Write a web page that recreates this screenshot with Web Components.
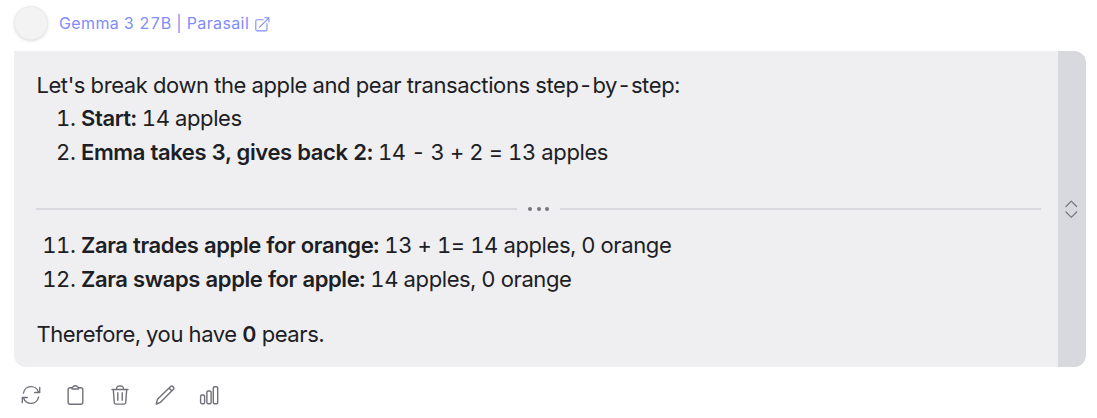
<!DOCTYPE html>
<html lang="en">
<head>
<meta charset="utf-8">
<title>Chat message</title>
<style>
body {
  margin: 0;
  background: #fff;
  font-family: Inter, "Liberation Sans", sans-serif;
}
</style>
</head>
<body>
<chat-message>
  <model-link slot="header">Gemma 3 27B | Parasail</model-link>
  <message-bubble>
    <message-line>Let's break down the apple and pear transactions step-by-step:</message-line>
    <list-line number="1."><b>Start:</b> 14 apples</list-line>
    <list-line number="2."><b>Emma takes 3, gives back 2:</b> 14 - 3 + 2 = 13 apples</list-line>
    <fold-divider></fold-divider>
    <list-line number="11."><b>Zara trades apple for orange:</b> 13 + 1= 14 apples, 0 orange</list-line>
    <list-line number="12."><b>Zara swaps apple for apple:</b> 14 apples, 0 orange</list-line>
    <message-line class="last">Therefore, you have <b>0</b> pears.</message-line>
  </message-bubble>
  <message-actions slot="footer"></message-actions>
</chat-message>

<script>
/**
 * Creates a template from a string.
 */
function html (text) {
  const template = document.createElement('template')
  template.innerHTML = text
  return template
}

/**
 * Base for all elements, clones the template into the shadow root.
 */
class BaseElement extends HTMLElement {
  constructor () {
    super()
    this.attachShadow({ mode: 'open' })
      .appendChild(this.constructor.template.content.cloneNode(true))
  }
}

customElements.define('chat-message',
  class extends BaseElement {
    static template = html(`
<style>
:host {
  display: flex;
  flex-direction: column;
  width: 1072px;
  padding: 5px 0 0 14px;
}
</style>
<slot name="header"></slot>
<slot></slot>
<slot name="footer"></slot>
`)
  }
)

customElements.define('model-link',
  class extends BaseElement {
    static template = html(`
<style>
:host {
  display: flex;
  align-items: center;
  height: 46px;
  box-sizing: border-box;
  padding-bottom: 10px;
  color: #818cf8;
  font-size: 16px;
  letter-spacing: 0.38px;
  font-variant-numeric: tabular-nums;
}
.avatar {
  width: 34px;
  height: 34px;
  border-radius: 50%;
  margin-right: 11px;
  box-sizing: border-box;
  background: #f3f3f3;
  border: 1px solid #ececec;
  box-shadow: 0 1px 3px rgba(0, 0, 0, 0.14);
}
svg {
  margin: 2px 0 0 6px;
}
</style>
<span class="avatar"></span>
<span><slot></slot></span>
<svg width="15" height="15" viewBox="0 0 15 15" fill="none" stroke="currentColor" stroke-width="1.1" stroke-linecap="round" stroke-linejoin="round">
  <path d="M8.2 2.7H2.3a1.5 1.5 0 0 0-1.5 1.5v8.2a1.5 1.5 0 0 0 1.5 1.5h8.2a1.5 1.5 0 0 0 1.5-1.5V6.5M4.3 10.4 13.9.8M9.7.8h4.2V5"/>
</svg>
`)
  }
)

customElements.define('message-bubble',
  class extends BaseElement {
    static template = html(`
<style>
:host {
  display: flex;
  height: 316px;
  overflow: hidden;
  border-radius: 0 12px 12px 12px;
  background: #efeff1;
  color: #1c2024;
  font-size: 22px;
  line-height: 34px;
  letter-spacing: -0.395px;
  font-variant-numeric: tabular-nums;
}
.content {
  flex: 1;
  padding: 17px 17px 0 22px;
}
.toggle {
  display: flex;
  align-items: center;
  justify-content: center;
  width: 28px;
  background: #d8d9df;
  color: #75757c;
}
svg {
  margin-right: 2px;
}
</style>
<div class="content"><slot></slot></div>
<div class="toggle">
  <svg width="14" height="20" viewBox="0 0 14 20" fill="none" stroke="currentColor" stroke-width="1.2" stroke-linecap="round" stroke-linejoin="round">
    <path d="M2 7.500 7.300 2.200l5.300 5.300M2 13l5.300 5.300L12.600 13"/>
  </svg>
</div>
`)
  }
)

customElements.define('message-line',
  class extends BaseElement {
    static template = html(`
<style>
:host {
  display: block;
  height: 33px;
  padding-left: 0.4px;
  white-space: nowrap;
}
:host(.last) {
  margin-top: 21px;
}
::slotted(b) {
  font-weight: 600;
}
</style>
<slot></slot>
`)
  }
)

customElements.define('list-line',
  class extends BaseElement {
    static template = html(`
<style>
:host {
  display: flex;
  height: 34px;
  white-space: nowrap;
}
.number {
  width: 39.5px;
  margin-right: 5.5px;
  text-align: right;
}
::slotted(b) {
  font-weight: 600;
}
</style>
<span class="number"></span>
<span><slot></slot></span>
`)

    connectedCallback () {
      this.shadowRoot.querySelector('.number').textContent = this.getAttribute('number')
    }
  }
)

customElements.define('fold-divider',
  class extends BaseElement {
    static template = html(`
<style>
:host {
  display: flex;
  align-items: center;
  box-sizing: border-box;
  height: 59px;
  padding-top: 20px;
  color: #75757c;
}
.line {
  flex: 1;
  height: 2px;
  background: #d8d9df;
}
.dots {
  display: flex;
  justify-content: center;
  gap: 4.5px;
  width: 43px;
}
i {
  width: 4px;
  height: 4px;
  border-radius: 50%;
  background: currentColor;
}
</style>
<span class="line"></span>
<span class="dots"><i></i><i></i><i></i></span>
<span class="line"></span>
`)
  }
)

customElements.define('message-actions',
  class extends BaseElement {
    static template = html(`
<style>
:host {
  display: flex;
  gap: 24.5px;
  padding: 18px 0 0 7px;
  color: #71717a;
}
svg {
  width: 20px;
  height: 20px;
  fill: none;
  stroke: currentColor;
  stroke-width: 1.4;
  stroke-linecap: round;
  stroke-linejoin: round;
}
</style>
<svg viewBox="0 0 20 20"><path d="M2.500 8A7.700 7.700 0 0 1 17.500 7.200M18.700 2.500v5h-5M17.500 12A7.700 7.700 0 0 1 2.500 12.800M1.300 17.500v-5h5"/></svg>
<svg viewBox="0.7 0 20 20"><path d="M6.500 2.700H4.800a2 2 0 0 0-2 2v12.600a2 2 0 0 0 2 2h10.700a2 2 0 0 0 2-2V4.700a2 2 0 0 0-2-2h-2M6.600 3.200c0-1.300.5-1.400 1.500-1.500.8-1.200 3-1.200 3.800 0 1 .1 1.500.2 1.500 1.500q0 .8-.8.800H7.400q-.8 0-.8-.8Z"/></svg>
<svg viewBox="0 0 20 20"><path d="M2 4.500h16M3.300 4.500l1 13a1.800 1.800 0 0 0 1.800 1.600h7.800a1.800 1.800 0 0 0 1.800-1.600l1-13M6.500 4.200c0-3 1.300-3.200 3.500-3.200s3.500.2 3.500 3.200M7.800 7.800v7.500M12.200 7.800v7.500"/></svg>
<svg viewBox="0 0 20 20"><path d="M1.200 19l1.300-4.700L15.400 1.700a1.850 1.850 0 0 1 2.800 2.800L5.500 17.300ZM14 3.100l2.800 2.800"/></svg>
<svg viewBox="-0.600 0.300 20 20"><rect x="1" y="10.300" width="4" height="8.700" rx="1.300"/><rect x="7.300" y="6.300" width="4.200" height="12.700" rx="1.300"/><rect x="13.700" y="2" width="4.400" height="17" rx="1.300"/></svg>
`)
  }
)
</script>
</body>
</html>
